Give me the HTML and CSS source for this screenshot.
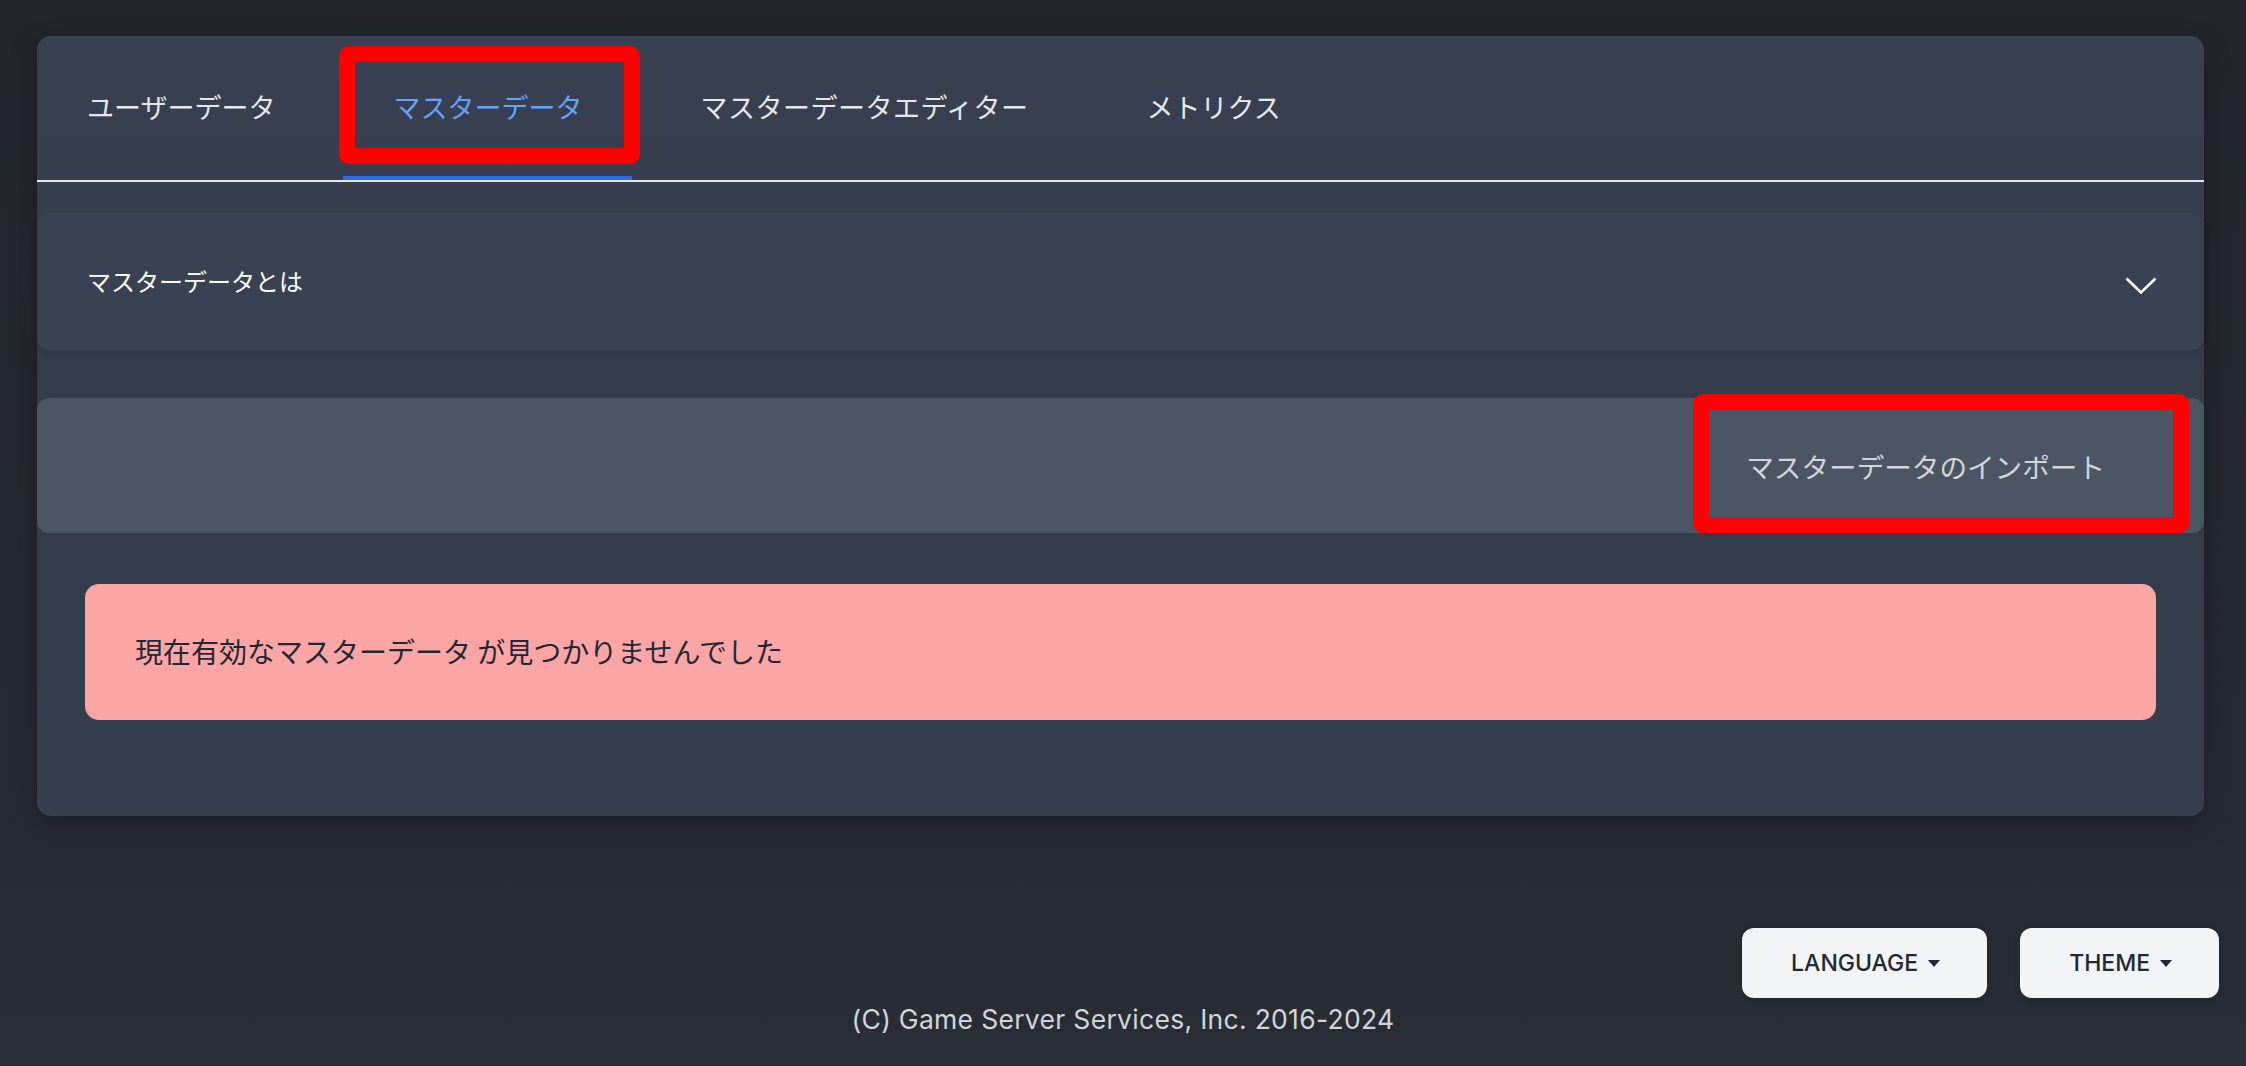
FILE: index.html
```
<!DOCTYPE html>
<html lang="ja">
<head>
<meta charset="utf-8">
<title>マスターデータ</title>
<link rel="stylesheet" href="styles.css">
</head>
<body>
<main class="page">
  <section class="card">
    <nav class="tabs">
      <a class="tab">ユーザーデータ</a>
      <a class="tab tab-active">マスターデータ</a>
      <a class="tab tab-wide">マスターデータエディター</a>
      <a class="tab">メトリクス</a>
      <span class="mark mark-tab"></span>
    </nav>
    <div class="accordion">
      <span class="accordion-title">マスターデータとは</span>
      <svg class="chevron" width="32" height="18" viewBox="0 0 32 18"><path d="M1.5 1.5 L16 15.5 L30.5 1.5" fill="none" stroke="#ffffff" stroke-width="2.6"/></svg>
    </div>
    <div class="toolbar">
      <button class="import-btn">マスターデータのインポート</button>
      <span class="mark mark-import"></span>
    </div>
    <div class="alert">現在有効なマスターデータ が見つかりませんでした</div>
  </section>
  <footer class="footer">
    <div class="footer-buttons">
      <button class="pill">LANGUAGE<span class="caret"></span></button>
      <button class="pill">THEME<span class="caret"></span></button>
    </div>
    <p class="copyright">(C) Game Server Services, Inc. 2016-2024</p>
  </footer>
</main>
</body>
</html>
```
FILE: styles.css
```
* { box-sizing: border-box; }
html, body { margin: 0; padding: 0; }
body {
  width: 2246px;
  height: 1066px;
  overflow: hidden;
  background: linear-gradient(180deg, #22252c 0%, #252931 60%, #292d36 100%);
  font-family: "Noto Sans CJK JP", "Noto Sans", sans-serif;
  color: #e5e7eb;
}
.page {
  padding: 36px 42px 0 37px;
}
.card {
  background: linear-gradient(180deg, #384051 0%, #343b4b 60%, #363e4f 100%);
  border-radius: 14px;
  box-shadow: 0 10px 28px rgba(0, 0, 0, 0.28);
  height: 780px;
}
.tabs {
  position: relative;
  display: flex;
  gap: 18px;
  height: 146px;
  border-bottom: 2px solid #e5e7eb;
}
.tab {
  display: flex;
  align-items: center;
  padding: 0 50px 4px;
  font-size: 27px;
  color: #e5e7eb;
  white-space: nowrap;
}
.tab-wide { letter-spacing: 0.5px; }
.tab-active {
  color: #60a5fa;
  box-shadow: inset 0 -4px 0 #2e6be6;
}
.mark {
  position: absolute;
  border: 16px solid #ff0000;
  border-radius: 10px;
  pointer-events: none;
}
.mark-tab {
  left: 302px;
  top: 10px;
  width: 301px;
  height: 118px;
}
.accordion {
  margin-top: 31px;
  height: 137px;
  display: flex;
  align-items: center;
  justify-content: space-between;
  padding: 0 47px 0 50px;
  background: #394253;
  border-radius: 12px;
  box-shadow: 0 3px 6px rgba(0, 0, 0, 0.12);
}
.accordion-title {
  font-size: 24px;
  color: #ffffff;
  margin-top: -2px;
}
.chevron { margin-top: 8px; }
.toolbar {
  position: relative;
  margin-top: 48px;
  height: 135px;
  display: flex;
  align-items: center;
  justify-content: flex-end;
  background: #4b5563;
  border-radius: 12px;
}
.import-btn {
  border: 0;
  background: transparent;
  font-family: "Noto Sans CJK JP", sans-serif;
  font-size: 27.6px;
  color: #d1d5db;
  padding: 0 38px;
  margin-right: 61px;
  height: 108px;
}
.mark-import {
  left: 1656px;
  top: -4px;
  width: 496px;
  height: 139px;
}
.alert {
  margin: 51px 48px 0;
  height: 136px;
  display: flex;
  align-items: center;
  padding: 0 50px 2px;
  background: #fca5a5;
  border-radius: 14px;
  color: #1f2937;
  font-size: 28px;
}
.footer {
  margin: 0 -42px 0 -37px;
}
.footer-buttons {
  margin-top: 112px;
  display: flex;
  justify-content: flex-end;
  gap: 33px;
  padding-right: 27px;
}
.pill {
  height: 70px;
  display: flex;
  align-items: center;
  padding: 0 47px 0 49px;
  border: 0;
  border-radius: 12px;
  background: #f3f4f6;
  color: #1f2937;
  font-family: "Inter", "Roboto", sans-serif;
  font-weight: 500;
  font-size: 23px;
  box-shadow: 0 2px 6px rgba(0, 0, 0, 0.2);
}
.caret {
  display: inline-block;
  width: 0;
  height: 0;
  margin-left: 10px;
  border-left: 6px solid transparent;
  border-right: 6px solid transparent;
  border-top: 7px solid #1f2937;
}
.copyright {
  margin: 8px 0 0;
  text-align: center;
  font-family: "Inter", "Roboto", sans-serif;
  font-size: 26.5px;
  line-height: 26px;
  letter-spacing: 0.3px;
  color: #d1d5db;
}
```
